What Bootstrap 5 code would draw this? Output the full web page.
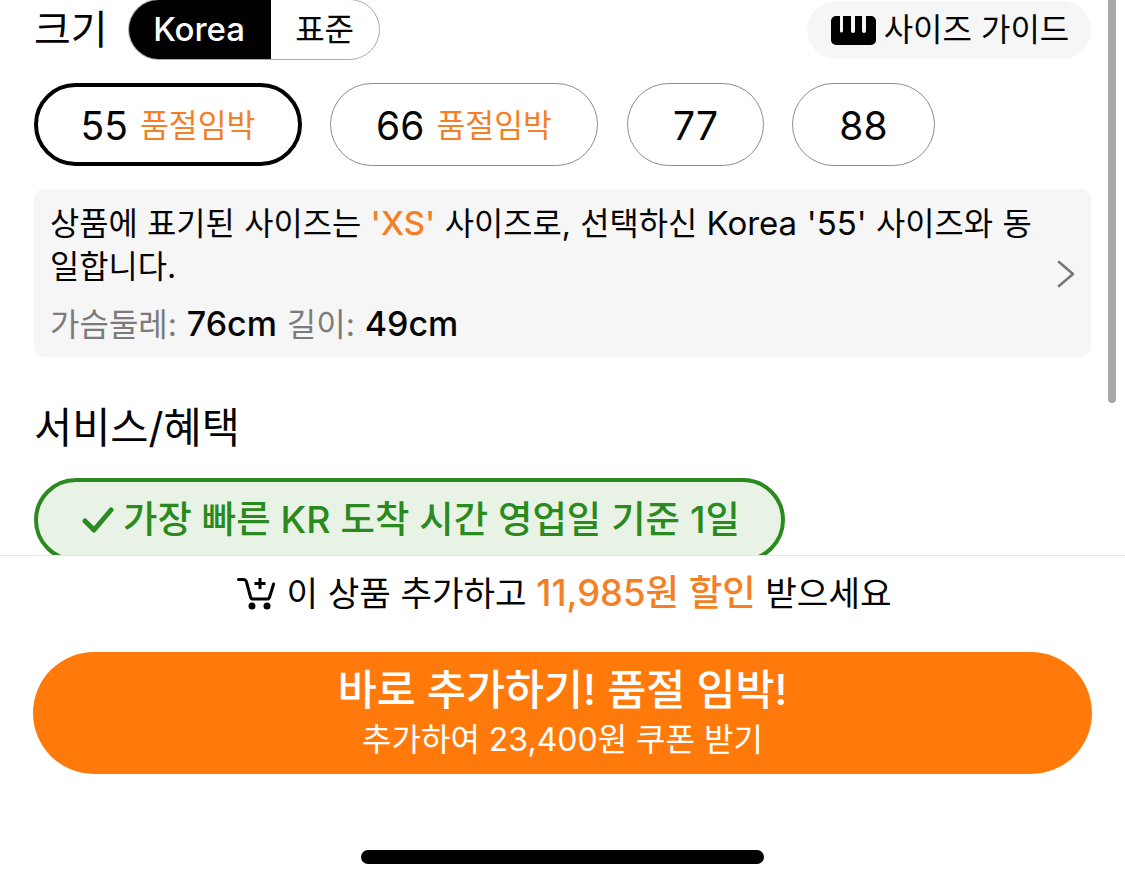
<!DOCTYPE html>
<html lang="ko">

<head>
    <meta charset="utf-8">
    <title>크기 선택</title>
    <link href="https://cdn.jsdelivr.net/npm/bootstrap@5.3.2/dist/css/bootstrap.min.css" rel="stylesheet">
    <style>
        :root {
            --accent: #f47f25;
            --panel: #f6f6f6;
            --green: #2a8a20;
        }

        html,
        body {
            height: 886px;
            overflow: hidden;
            background: #fff;
            color: #050505;
            font-family: "Inter", "Noto Sans CJK KR", sans-serif;
        }

        .sheet {
            height: 886px;
            position: relative;
        }

        .scroll-area {
            height: 555px;
            overflow: hidden;
            padding: 0 34px;
        }

        .scroll-thumb {
            position: absolute;
            left: 1108px;
            top: 0;
            width: 8px;
            height: 403px;
            background: #a8a8a8;
            border-radius: 0 0 4px 4px;
        }

        .head-row {
            height: 60px;
        }

        .head-title {
            font-size: 40px;
            line-height: 60px;
            margin-right: 20px;
        }

        .unit-switch {
            height: 61px;
            margin-top: -1px;
            width: 252px;
            border: 1px solid #aaa;
            border-radius: 31px;
            overflow: hidden;
            font-size: 32px;
        }

        .unit-on {
            width: 143px;
            background: #000;
            color: #fff;
            margin: -1px 0 -1px -1px;
            font-size: 33px;
            font-weight: 500;
        }

        .guide-btn {
            width: 284px;
            height: 58px;
            padding-left: 2px;
            background: var(--panel);
            border-radius: 29px;
            font-size: 32px;
            gap: 8px;
        }

        .size-row {
            margin-top: 23px;
            gap: 28px;
        }

        .size-opt {
            height: 83px;
            padding-top: 4px;
            border: 1px solid #8d8d8d;
            border-radius: 42px;
            font-size: 39px;
            gap: 12px;
        }

        .size-opt.picked {
            border: 4px solid #000;
        }

        .size-wide {
            width: 268px;
        }

        .size-77 {
            width: 137px;
            margin-left: 1px;
        }

        .size-88 {
            width: 143px;
        }

        .size-note {
            font-size: 31.4px;
            color: var(--accent);
        }

        .info-box {
            margin-top: 23px;
            height: 168px;
            width: 1057px;
            background: var(--panel);
            border-radius: 10px;
            padding: 13px 16px 0;
            position: relative;
            font-size: 31.8px;
            line-height: 43px;
            word-spacing: .4px;
        }

        .info-box p {
            margin: 0;
        }

        .info-box .info-measure {
            margin-top: 14px;
            font-size: 32px;
            word-spacing: .8px;
        }

        .latin-text {
            font-size: 33px;
        }

        .measure-val {
            font-size: 34px;
            font-weight: 500;
        }

        .hl {
            color: var(--accent);
        }

        .hl-strong {
            color: var(--accent);
            font-size: 36.4px;
            font-weight: 500;
        }

        .muted-label {
            color: #7b7b7b;
        }

        .info-chevron {
            position: absolute;
            right: 15px;
            top: 70px;
        }

        .section-title {
            margin: 44px 0 23px;
            font-size: 41.5px;
            line-height: 54px;
            font-weight: 400;
        }

        .promo-pill {
            width: 751px;
            height: 84px;
            padding-left: 3px;
            border: 4px solid var(--green);
            border-radius: 42px;
            background: #e8f3e6;
            color: var(--green);
            font-size: 37.4px;
            font-weight: 500;
            gap: 9px;
        }

        .bottom-bar {
            height: 331px;
            border-top: 1px solid #e4e4e4;
            padding: 0 34px;
            position: relative;
        }

        .cart-line {
            height: 77px;
            padding: 0 0 2px 4px;
            font-size: 34.3px;
            gap: 8px;
        }

        .cta {
            margin: 19px 0 0 -1px;
            width: 1059px;
            height: 122px;
            background: #ff7a0a;
            color: #fff;
            border-radius: 61px;
        }

        .cta-main {
            font-size: 42.4px;
            line-height: 50px;
            margin-top: -2px;
            font-weight: 500;
        }

        .cta-sub {
            font-size: 32px;
            line-height: 40px;
            margin-top: 5px;
        }

        .home-bar {
            position: absolute;
            left: 361px;
            top: 294px;
            width: 403px;
            height: 14px;
            background: #000;
            border-radius: 7px;
        }
    </style>
</head>

<body>
    <div class="sheet">
        <div class="scroll-area">
            <div class="head-row d-flex align-items-center">
                <div class="head-title">크기</div>
                <div class="unit-switch d-flex">
                    <div class="unit-on d-flex align-items-center justify-content-center">Korea</div>
                    <div class="flex-grow-1 d-flex align-items-center justify-content-center">표준</div>
                </div>
                <div class="guide-btn d-flex align-items-center justify-content-center ms-auto">
                    <svg width="45" height="29" viewBox="0 0 45 29" aria-hidden="true">
                        <path fill="#000" d="M5 0h4v15a1.5 1.5 0 0 0 3 0V0h8v15a2 2 0 0 0 4 0V0h7v15a2 2 0 0 0 4 0V0h5a5 5 0 0 1 5 5v19a5 5 0 0 1-5 5H5a5 5 0 0 1-5-5V5a5 5 0 0 1 5-5z" />
                    </svg>
                    <span>사이즈 가이드</span>
                </div>
            </div>

            <div class="size-row d-flex">
                <div class="size-opt picked size-wide d-flex align-items-center justify-content-center">55 <span class="size-note">품절임박</span></div>
                <div class="size-opt size-wide d-flex align-items-center justify-content-center">66 <span class="size-note">품절임박</span></div>
                <div class="size-opt size-77 d-flex align-items-center justify-content-center">77</div>
                <div class="size-opt size-88 d-flex align-items-center justify-content-center">88</div>
            </div>

            <div class="info-box">
                <p>상품에 표기된 사이즈는 <span class="hl fw-medium latin-text">'XS'</span> 사이즈로, 선택하신 <span class="latin-text">Korea '55'</span> 사이즈와 동</p>
                <p>일합니다.</p>
                <p class="info-measure"><span class="muted-label">가슴둘레:</span> <span class="measure-val">76cm</span> <span class="muted-label">길이:</span> <span class="measure-val">49cm</span></p>
                <svg class="info-chevron" width="20" height="30" viewBox="0 0 20 30" aria-hidden="true">
                    <path d="M3 3l14 12L3 27" fill="none" stroke="#777" stroke-width="2.6" stroke-linecap="round" stroke-linejoin="round" />
                </svg>
            </div>

            <h2 class="section-title">서비스/혜택</h2>

            <div class="promo-pill d-flex align-items-center justify-content-center">
                <svg width="32" height="26" viewBox="0 0 32 26" aria-hidden="true">
                    <path d="M3 14l9 9L29 3" fill="none" stroke="#2a8a20" stroke-width="5" stroke-linecap="round" stroke-linejoin="round" />
                </svg>
                <span>가장 빠른 KR 도착 시간 영업일 기준 1일</span>
            </div>
        </div>

        <div class="scroll-thumb"></div>

        <div class="bottom-bar">
            <div class="cart-line d-flex align-items-center justify-content-center">
                <svg width="41" height="33" viewBox="0 0 41 33" aria-hidden="true">
                    <path d="M1.5 2.5h5c1.5 0 2.5 1 3 2.5l4 15c.4 1.5 1.3 2 2.5 2h14c1.3 0 2.2-.6 2.6-2l4-13" fill="none" stroke="#000" stroke-width="3" stroke-linecap="round" stroke-linejoin="round" />
                    <path d="M23 1v11M17.5 6.5h11" fill="none" stroke="#000" stroke-width="3" />
                    <circle cx="15" cy="29" r="3.5" fill="#000" />
                    <circle cx="30" cy="29" r="3.5" fill="#000" />
                </svg>
                <span>이 상품 추가하고 <span class="hl-strong">11,985원 할인</span> 받으세요</span>
            </div>
            <div class="cta d-flex flex-column align-items-center justify-content-center">
                <div class="cta-main">바로 추가하기! 품절 임박!</div>
                <div class="cta-sub">추가하여 23,400원 쿠폰 받기</div>
            </div>
            <div class="home-bar"></div>
        </div>
    </div>

    <script src="https://cdn.jsdelivr.net/npm/bootstrap@5.3.2/dist/js/bootstrap.bundle.min.js"></script>
</body>

</html>
